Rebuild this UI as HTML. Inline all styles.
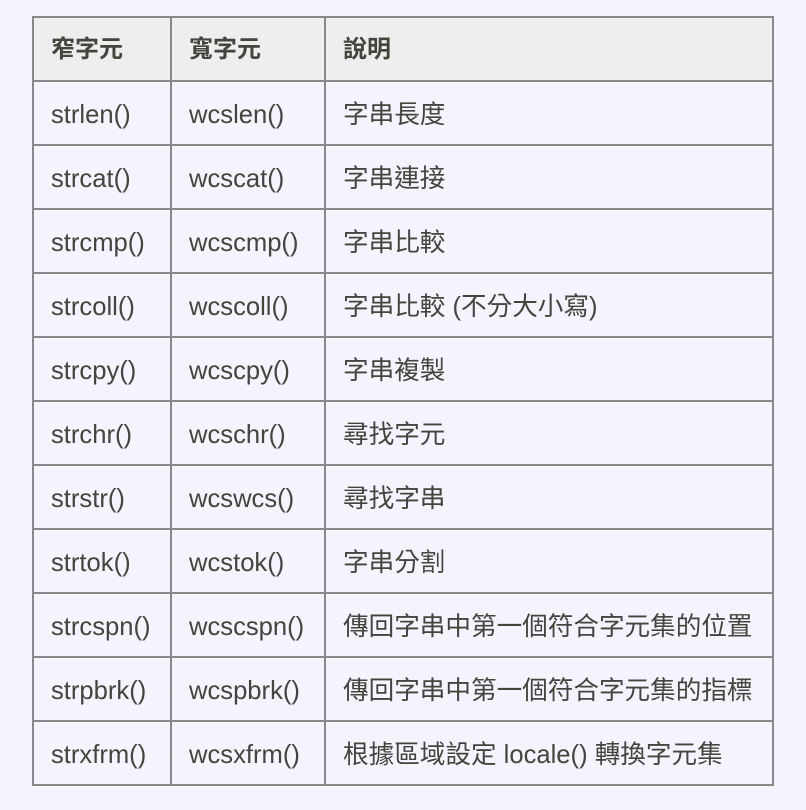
<!DOCTYPE html>
<html><head><meta charset="utf-8"><style>
html,body{margin:0;padding:0;background:#f4f4fe;}
body{width:806px;height:810px;overflow:hidden;}
table{position:absolute;left:32px;top:16px;border-collapse:collapse;width:742px;table-layout:fixed;
font-family:"Liberation Sans","Noto Sans CJK TC",sans-serif;font-size:25.6px;color:#45453d;}
td,th{border:2px solid #888;height:62px;padding:4px 0 0 17px;text-align:left;vertical-align:middle;white-space:nowrap;line-height:30px;box-sizing:border-box;}
th{background:#eeeeee;font-weight:bold;font-size:24px;padding-top:2px;}
tr{height:64px;}
</style></head><body>
<table>
<colgroup><col style="width:138px"><col style="width:154px"><col></colgroup>
<tr><th>窄字元</th><th>寬字元</th><th>說明</th></tr>
<tr><td>strlen()</td><td>wcslen()</td><td>字串長度</td></tr>
<tr><td>strcat()</td><td>wcscat()</td><td>字串連接</td></tr>
<tr><td>strcmp()</td><td>wcscmp()</td><td>字串比較</td></tr>
<tr><td>strcoll()</td><td>wcscoll()</td><td>字串比較 (不分大小寫)</td></tr>
<tr><td>strcpy()</td><td>wcscpy()</td><td>字串複製</td></tr>
<tr><td>strchr()</td><td>wcschr()</td><td>尋找字元</td></tr>
<tr><td>strstr()</td><td>wcswcs()</td><td>尋找字串</td></tr>
<tr><td>strtok()</td><td>wcstok()</td><td>字串分割</td></tr>
<tr><td>strcspn()</td><td>wcscspn()</td><td>傳回字串中第一個符合字元集的位置</td></tr>
<tr><td>strpbrk()</td><td>wcspbrk()</td><td>傳回字串中第一個符合字元集的指標</td></tr>
<tr><td>strxfrm()</td><td>wcsxfrm()</td><td>根據區域設定 locale() 轉換字元集</td></tr>
</table>
</body></html>
